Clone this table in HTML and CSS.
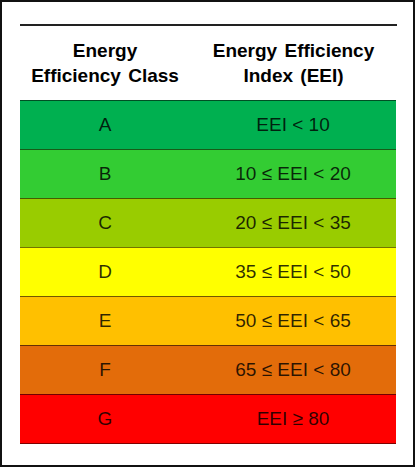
FILE: index.html
```html
<!DOCTYPE html>
<html>
<head>
<meta charset="utf-8">
<link rel="stylesheet" href="styles.css">
</head>
<body>
<div class="frame">
  <div class="table">
    <div class="head">
      <div class="c1">Energy<br>Efficiency Class</div>
      <div class="c2">Energy Efficiency<br>Index (EEI)</div>
    </div>
    <div class="row a"><div class="c1">A</div><div class="c2">EEI &lt; 10</div></div>
    <div class="row b"><div class="c1">B</div><div class="c2">10 ≤ EEI &lt; 20</div></div>
    <div class="row c"><div class="c1">C</div><div class="c2">20 ≤ EEI &lt; 35</div></div>
    <div class="row d"><div class="c1">D</div><div class="c2">35 ≤ EEI &lt; 50</div></div>
    <div class="row e"><div class="c1">E</div><div class="c2">50 ≤ EEI &lt; 65</div></div>
    <div class="row f"><div class="c1">F</div><div class="c2">65 ≤ EEI &lt; 80</div></div>
    <div class="row g"><div class="c1">G</div><div class="c2">EEI ≥ 80</div></div>
  </div>
</div>
</body>
</html>
```
FILE: styles.css
```css
html, body {
  margin: 0;
  padding: 0;
  background: #fff;
}
.frame {
  box-sizing: border-box;
  width: 415px;
  height: 467px;
  border: 2px solid #111;
  padding: 22px 0 0 18px;
  font-family: "Liberation Sans", Arial, sans-serif;
}
.table {
  width: 377px;
}
.head {
  display: grid;
  grid-template-columns: 170px 207px;
  border-top: 2px solid #222;
  padding: 12px 0;
  font-weight: bold;
  font-size: 19px;
  line-height: 25px;
  word-spacing: 2px;
  color: #000;
  text-align: center;
}
.row {
  box-sizing: border-box;
  width: 376px;
  height: 49px;
  display: grid;
  grid-template-columns: 170px 206px;
  border-top: 1px solid rgba(0, 0, 0, 0.55);
  font-size: 19px;
  line-height: 48px;
  text-align: center;
  color: rgba(0, 0, 0, 0.82);
}
.row.g {
  height: 50px;
  border-bottom: 1px solid rgba(0, 0, 0, 0.5);
}
.a { background: #00b050; }
.b { background: #33cc33; }
.c { background: #99cc00; }
.d { background: #ffff00; }
.e { background: #ffc000; }
.f { background: #e36c0a; }
.g { background: #ff0000; }
```
